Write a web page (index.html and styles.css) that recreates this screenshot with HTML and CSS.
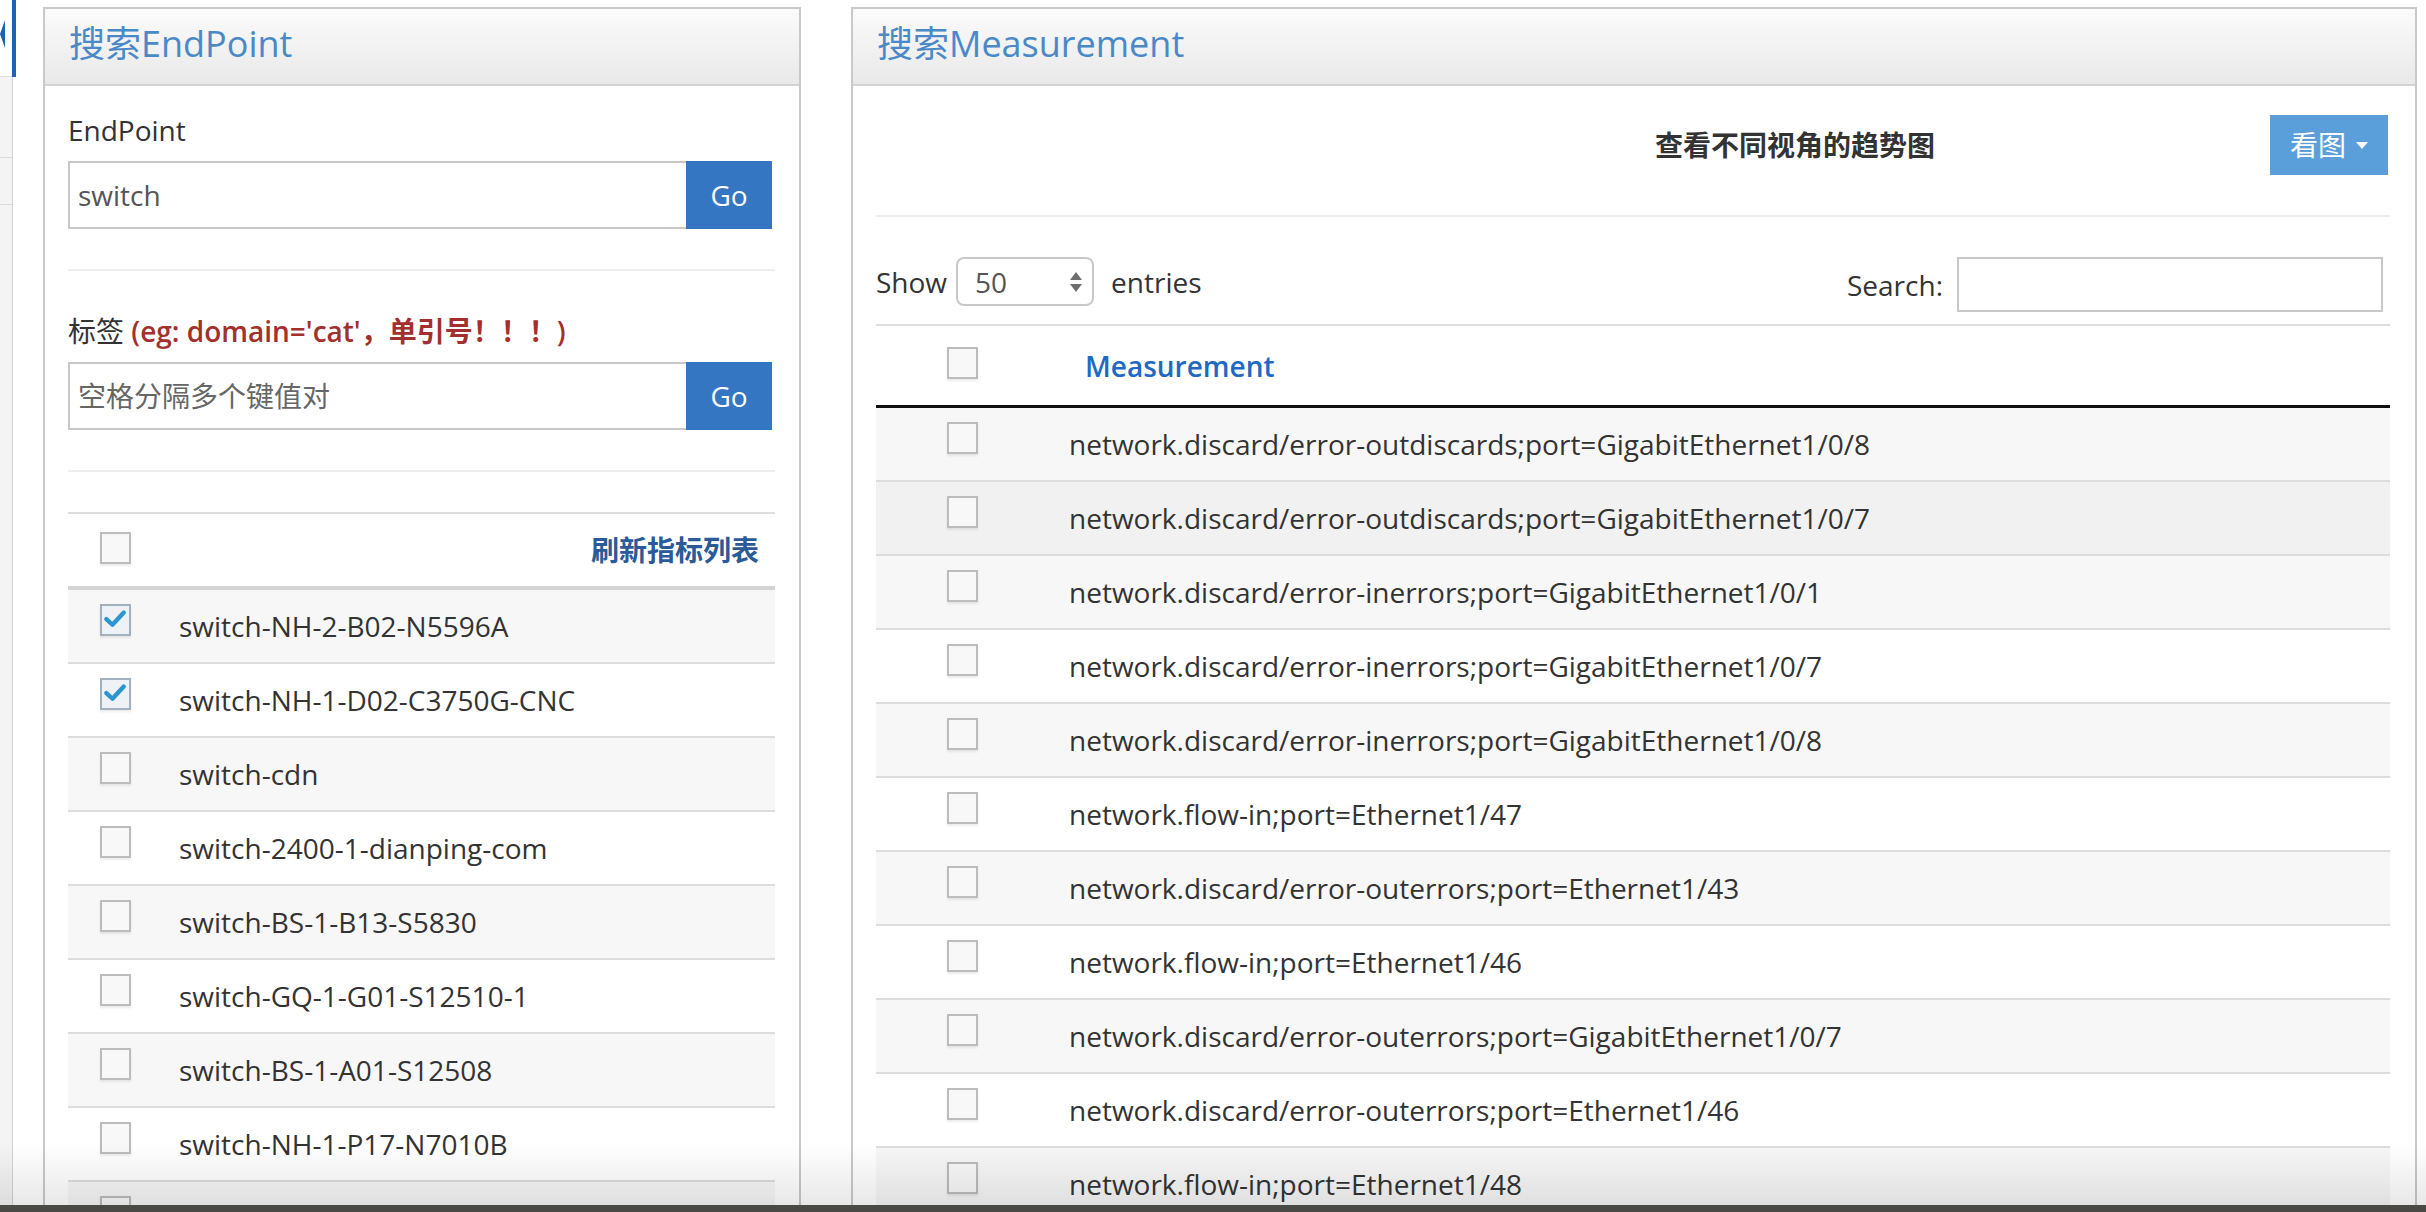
FILE: index.html
```html
<!DOCTYPE html>
<html lang="zh-CN">
<head>
<meta charset="utf-8">
<title>Search</title>
<link rel="stylesheet" href="styles.css">
</head>
<body>
<div class="page">
  <aside class="sidebar">
    <div class="sb-item active"></div>
    <div class="sb-item"></div>
    <div class="sb-item short"></div>
  </aside>
  <main class="main">
    <section class="panel panel-left">
      <div class="panel-heading"><h3 class="panel-title">搜索EndPoint</h3></div>
      <div class="panel-body">
        <label class="field-label">EndPoint</label>
        <div class="input-group">
          <input class="form-control" type="text" value="switch">
          <button class="btn-go">Go</button>
        </div>
        <hr>
        <label class="field-label">标签 <span class="hint">(eg: domain='cat'，单引号！！！)</span></label>
        <div class="input-group">
          <input class="form-control" type="text" placeholder="空格分隔多个键值对">
          <button class="btn-go">Go</button>
        </div>
        <hr>
        <table class="table table-ep">
          <thead>
            <tr><th class="cbcell"><span class="cb"></span></th><th class="refresh">刷新指标列表</th></tr>
          </thead>
          <tbody>
            <tr><td class="cbcell"><span class="cb checked"><svg viewBox="0 0 31 31" width="27" height="27"><path d="M5 15 L12 21.5 L25 7.5" fill="none" stroke="#2d95d0" stroke-width="5" stroke-linecap="round" stroke-linejoin="round"/></svg></span></td><td>switch-NH-2-B02-N5596A</td></tr>
            <tr><td class="cbcell"><span class="cb checked"><svg viewBox="0 0 31 31" width="27" height="27"><path d="M5 15 L12 21.5 L25 7.5" fill="none" stroke="#2d95d0" stroke-width="5" stroke-linecap="round" stroke-linejoin="round"/></svg></span></td><td>switch-NH-1-D02-C3750G-CNC</td></tr>
            <tr><td class="cbcell"><span class="cb"></span></td><td>switch-cdn</td></tr>
            <tr><td class="cbcell"><span class="cb"></span></td><td>switch-2400-1-dianping-com</td></tr>
            <tr><td class="cbcell"><span class="cb"></span></td><td>switch-BS-1-B13-S5830</td></tr>
            <tr><td class="cbcell"><span class="cb"></span></td><td>switch-GQ-1-G01-S12510-1</td></tr>
            <tr><td class="cbcell"><span class="cb"></span></td><td>switch-BS-1-A01-S12508</td></tr>
            <tr><td class="cbcell"><span class="cb"></span></td><td>switch-NH-1-P17-N7010B</td></tr>
            <tr><td class="cbcell"><span class="cb"></span></td><td class="empty"></td></tr>
          </tbody>
        </table>
      </div>
    </section>

    <section class="panel panel-right">
      <div class="panel-heading"><h3 class="panel-title">搜索Measurement</h3></div>
      <div class="panel-body body-right">
        <div class="toolbar">
          <div class="toolbar-title">查看不同视角的趋势图</div>
          <button class="chart-btn">看图<span class="caret"></span></button>
        </div>
        <hr>
        <div class="dt-top">
          <div class="dt-length">
            <span>Show</span>
            <span class="select"><span>50</span><svg class="arrows" viewBox="0 0 14 22" width="14" height="22"><path d="M7 1 L13 9 L1 9 Z M1 13 L13 13 L7 21 Z" fill="#6e6e6e"/></svg></span>
            <span>entries</span>
          </div>
          <div class="dt-filter">
            <span>Search:</span>
            <input class="search-input" type="text">
          </div>
        </div>
        <table class="table table-ms">
          <thead>
            <tr><th class="cbcell"><span class="cb"></span></th><th class="ms-head">Measurement</th></tr>
          </thead>
          <tbody>
            <tr><td class="cbcell"><span class="cb"></span></td><td>network.discard/error-outdiscards;port=GigabitEthernet1/0/8</td></tr>
            <tr class="hover"><td class="cbcell"><span class="cb"></span></td><td>network.discard/error-outdiscards;port=GigabitEthernet1/0/7</td></tr>
            <tr><td class="cbcell"><span class="cb"></span></td><td>network.discard/error-inerrors;port=GigabitEthernet1/0/1</td></tr>
            <tr><td class="cbcell"><span class="cb"></span></td><td>network.discard/error-inerrors;port=GigabitEthernet1/0/7</td></tr>
            <tr><td class="cbcell"><span class="cb"></span></td><td>network.discard/error-inerrors;port=GigabitEthernet1/0/8</td></tr>
            <tr><td class="cbcell"><span class="cb"></span></td><td>network.flow-in;port=Ethernet1/47</td></tr>
            <tr><td class="cbcell"><span class="cb"></span></td><td>network.discard/error-outerrors;port=Ethernet1/43</td></tr>
            <tr><td class="cbcell"><span class="cb"></span></td><td>network.flow-in;port=Ethernet1/46</td></tr>
            <tr><td class="cbcell"><span class="cb"></span></td><td>network.discard/error-outerrors;port=GigabitEthernet1/0/7</td></tr>
            <tr><td class="cbcell"><span class="cb"></span></td><td>network.discard/error-outerrors;port=Ethernet1/46</td></tr>
            <tr><td class="cbcell"><span class="cb"></span></td><td>network.flow-in;port=Ethernet1/48</td></tr>
          </tbody>
        </table>
      </div>
    </section>
  </main>
</div>
<div class="shade"></div>
<div class="edge"></div>
</body>
</html>
```

FILE: styles.css
```css
html, body {
  margin: 0;
  padding: 0;
}
body {
  font-family: "Open Sans", "Noto Sans CJK SC", sans-serif;
  font-size: 28px;
  line-height: 40px;
  color: #333;
  background: #fff;
  height: 1212px;
  overflow: hidden;
}

.page {
  display: flex;
  height: 1212px;
}

/* left navigation strip */
.sidebar {
  width: 13px;
  flex: none;
  box-sizing: border-box;
  background: #f4f4f4;
  border-right: 1px solid #d2d2d2;
}
.sb-item {
  height: 81px;
  box-sizing: border-box;
  border-bottom: 1px solid #dcdcdc;
}
.sb-item.short {
  height: 47px;
}
.sb-item.active {
  height: 77px;
  background: #fff;
  position: relative;
}
.sb-item.active::after {
  content: "";
  position: absolute;
  top: 0;
  bottom: -1px;
  right: -4px;
  width: 4px;
  background: #1c62b0;
}
.sb-item.active::before {
  content: "";
  position: absolute;
  left: 0;
  top: 20px;
  border-style: solid;
  border-width: 14px 5px 14px 0;
  border-color: transparent #1c62b0 transparent transparent;
}

.main {
  display: flex;
  gap: 50px;
  padding: 7px 0 0 30px;
  flex: none;
}

.panel {
  box-sizing: border-box;
  border: 2px solid #c9c9c9;
  border-bottom: 0;
  background: #fff;
  height: 1205px;
  overflow: hidden;
}
.panel-left { width: 758px; }
.panel-right { width: 1566px; }

.panel-heading {
  height: 77px;
  box-sizing: border-box;
  padding: 15px 24px 0;
  background: linear-gradient(#fbfbfb, #e9e9e9);
  border-bottom: 2px solid #d3d3d3;
}
.panel-title {
  margin: 0;
  font-size: 36px;
  line-height: 40px;
  font-weight: normal;
  color: #4a89c7;
}

.panel-body {
  padding: 24px 24px 0 23px;
}
.body-right {
  padding: 29px 25px 0 23px;
}

.field-label {
  display: block;
  margin-bottom: 11px;
}
.hint {
  color: #a3302c;
  font-weight: 600;
}

.input-group {
  display: flex;
  height: 68px;
  margin-right: 3px;
}
.form-control {
  flex: 1;
  min-width: 0;
  height: 68px;
  box-sizing: border-box;
  border: 2px solid #c8c8c8;
  border-right: 0;
  padding: 0 8px;
  font: inherit;
  color: #555;
  background: #fff;
  outline: none;
}
.form-control::placeholder {
  color: #666;
  opacity: 1;
}
.btn-go {
  width: 86px;
  border: 0;
  background: #3476c2;
  color: #fff;
  font: inherit;
  padding: 0;
}

hr {
  border: 0;
  border-top: 2px solid #eee;
  margin: 40px 0;
}

/* tables */
.table {
  width: 100%;
  border-collapse: separate;
  border-spacing: 0;
}
.table th,
.table td {
  vertical-align: top;
  text-align: left;
  white-space: nowrap;
}
.table td {
  border-bottom: 2px solid #ddd;
}
.table td.empty {
  height: 40px;
}
.table tbody tr:nth-child(odd) td {
  background: #f7f7f7;
}
.table tbody tr.hover td {
  background: #f1f1f1;
}

.table-ep th {
  border-top: 2px solid #ddd;
  border-bottom: 4px solid #d4d4d4;
  padding: 16px;
}
.table-ep td {
  padding: 16px;
}
.table-ep .cbcell {
  width: 95px;
  box-sizing: border-box;
  padding-left: 0;
  padding-right: 0;
}
.table-ep th.cbcell .cb { margin-top: 2px; }
.refresh {
  text-align: right !important;
  color: #2a5a97;
  font-weight: bold;
}

.cb {
  display: block;
  width: 31px;
  height: 32px;
  box-sizing: border-box;
  margin: -2px auto 0;
  border: 2px solid #bcbcbc;
  background: #f8f8f8;
  box-shadow: 0 2px 2px rgba(0, 0, 0, 0.08);
}
.cb.checked {
  border-color: #a2afbd;
  background: #eef2f7;
}
.cb svg {
  display: block;
}

/* right panel */
.toolbar {
  display: flex;
  align-items: center;
  height: 60px;
}
.toolbar-title {
  flex: 1;
  padding-left: 779px;
  font-weight: bold;
  color: #333;
}
.chart-btn {
  width: 118px;
  height: 60px;
  margin-right: 2px;
  border: 0;
  background: #5a9fd9;
  color: #fff;
  font: inherit;
  display: flex;
  align-items: center;
  justify-content: center;
  gap: 10px;
  padding: 0;
}
.caret {
  width: 0;
  height: 0;
  border-top: 7px solid #fff;
  border-left: 6px solid transparent;
  border-right: 6px solid transparent;
}

.dt-top {
  display: flex;
  justify-content: space-between;
  align-items: flex-start;
  height: 55px;
}
.dt-length {
  display: flex;
  align-items: center;
  height: 49px;
}
.select {
  width: 138px;
  height: 49px;
  box-sizing: border-box;
  margin: 0 17px 0 9px;
  border: 2px solid #c8c8c8;
  border-radius: 8px;
  display: flex;
  align-items: center;
  justify-content: space-between;
  padding: 0 9px 0 17px;
  color: #555;
}
.arrows {
  display: block;
}
.dt-filter {
  display: flex;
  align-items: center;
  height: 55px;
}
.search-input {
  width: 426px;
  height: 55px;
  box-sizing: border-box;
  margin: 0 7px 0 14px;
  border: 2px solid #c8c8c8;
  font: inherit;
  outline: none;
}

.table-ms {
  margin-top: 12px;
}
.table-ms th {
  border-top: 2px solid #ddd;
  border-bottom: 3px solid #111;
  padding: 20px 36px 19px;
}
.table-ms td {
  padding: 16px 20px;
  color: #333;
}
.table-ms .cbcell {
  width: 173px;
  box-sizing: border-box;
  padding-left: 0;
  padding-right: 0;
}
.table-ms th.cbcell .cb { margin-top: 1px; }
.ms-head {
  color: #1f69c3;
  font-weight: 600;
}

/* window chrome at the bottom of the capture */
.shade {
  position: fixed;
  left: 0;
  right: 0;
  bottom: 7px;
  height: 62px;
  background: linear-gradient(rgba(0, 0, 0, 0), rgba(0, 0, 0, 0.09));
  pointer-events: none;
}
.edge {
  position: fixed;
  left: 0;
  right: 0;
  bottom: 0;
  height: 7px;
  background: #4b4945;
}
```
